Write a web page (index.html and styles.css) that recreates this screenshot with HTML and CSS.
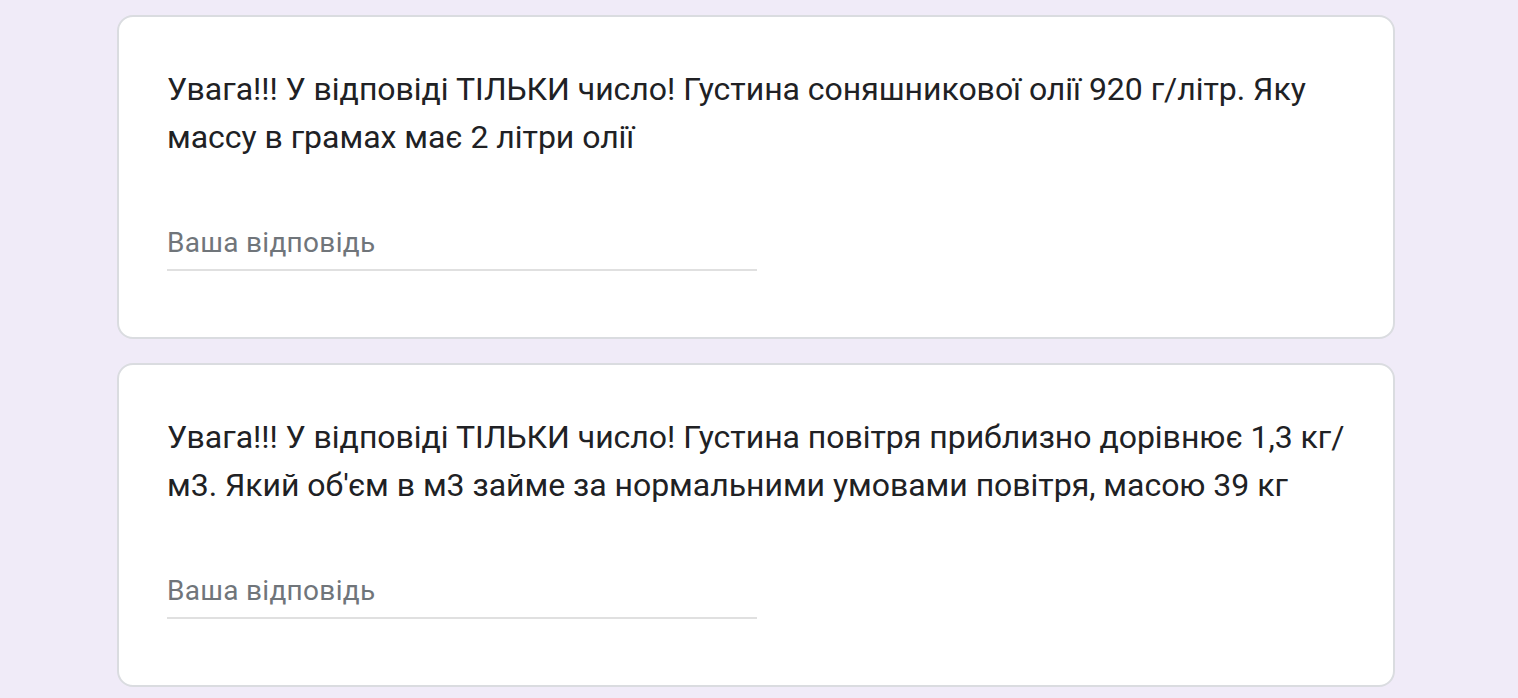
FILE: index.html
```html
<!DOCTYPE html>
<html lang="uk">
<head>
<meta charset="utf-8">
<title>Форма</title>
<link rel="stylesheet" href="styles.css">
</head>
<body>
<div class="form">
  <div class="card">
    <div class="question">Увага!!! У відповіді ТІЛЬКИ число! Густина соняшникової олії 920 г/літр. Яку массу в грамах має 2 літри олії</div>
    <div class="answer">
      <div class="input"><span class="placeholder">Ваша відповідь</span></div>
    </div>
  </div>
  <div class="card">
    <div class="question">Увага!!! У відповіді ТІЛЬКИ число! Густина повітря приблизно дорівнює 1,3 кг/<wbr>м3. Який об'єм в м3 займе за нормальними умовами повітря, масою 39 кг</div>
    <div class="answer">
      <div class="input"><span class="placeholder">Ваша відповідь</span></div>
    </div>
  </div>
</div>
</body>
</html>
```

FILE: styles.css
```css
html, body {
  margin: 0;
  padding: 0;
  background: #f0ebf8;
  height: 100%;
  overflow: hidden;
}
body {
  font-family: Roboto, "Noto Sans", Arial, sans-serif;
}
.form {
  width: 1278px;
  margin: 0 0 0 117px;
  padding-top: 15px;
  display: flex;
  flex-direction: column;
  gap: 24px;
}
.card {
  background: #ffffff;
  border: 2px solid #dadce0;
  border-radius: 16px;
  padding: 48px;
  box-sizing: border-box;
  height: 324px;
}
.question {
  font-size: 32px;
  line-height: 48px;
  letter-spacing: -0.03px;
  color: #202124;
  font-weight: 400;
}
.answer {
  padding-top: 56px;
}
.input {
  width: 590px;
  height: 52px;
  border-bottom: 2px solid #e0e0e0;
  display: flex;
  align-items: center;
}
.placeholder {
  font-size: 28px;
  line-height: 40px;
  color: #70757a;
  letter-spacing: 0.3px;
}
```
